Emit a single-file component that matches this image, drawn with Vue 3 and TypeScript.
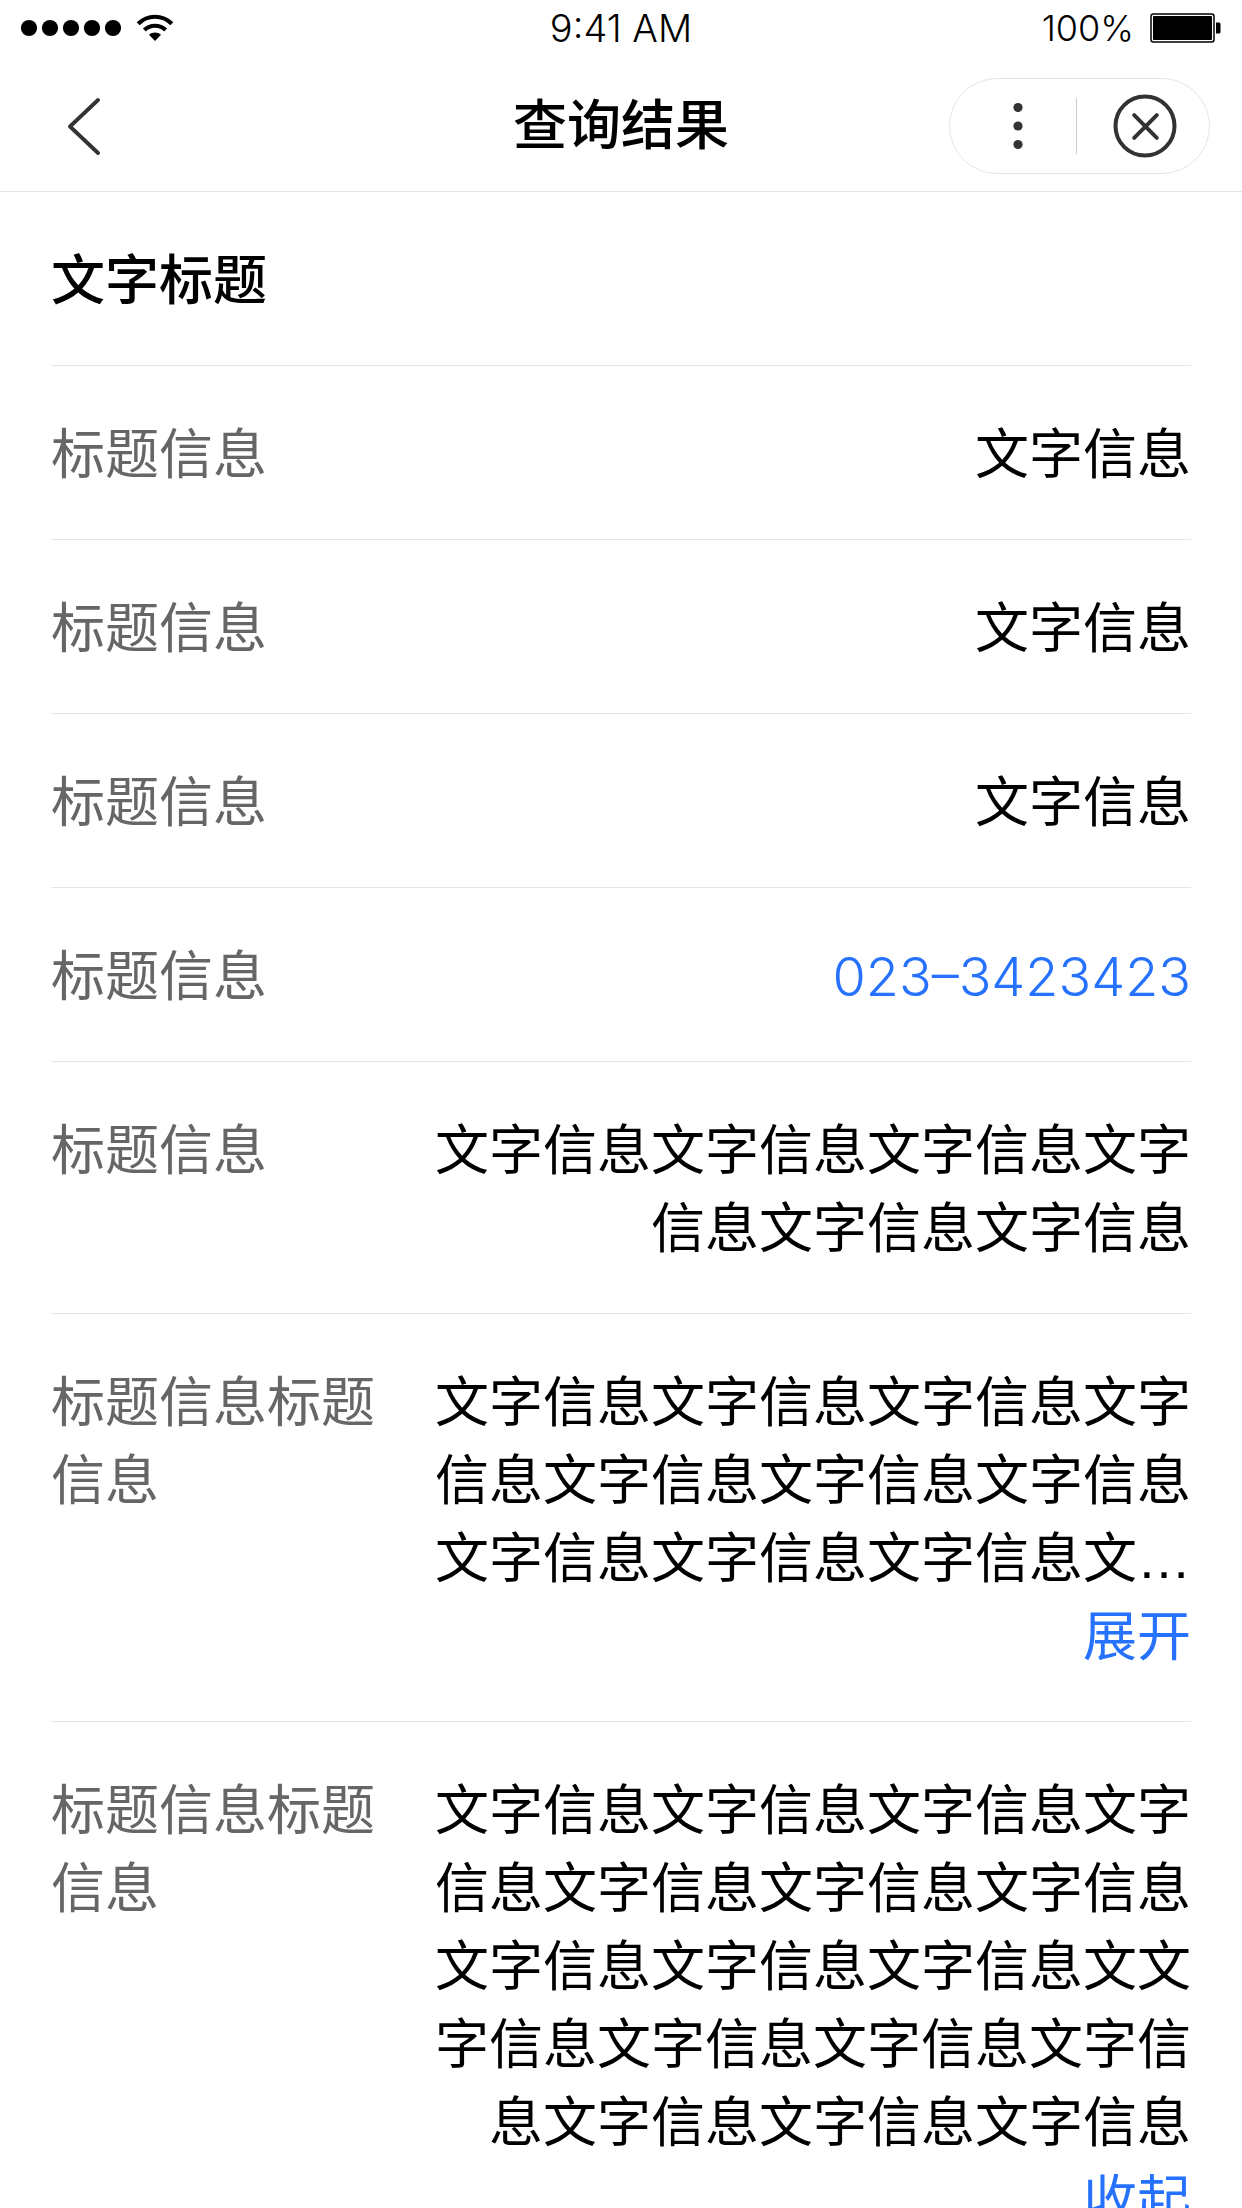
<script setup lang="ts">
import { ref } from 'vue'

interface Row {
  label: string
  value: string
  tel?: string
  collapsible?: boolean
  expanded?: boolean
}

const unit = '文字信息'
const previewLength = 41

const rows = ref<Row[]>([
  { label: '标题信息', value: unit },
  { label: '标题信息', value: unit },
  { label: '标题信息', value: unit },
  { label: '标题信息', value: '023–3423423', tel: '0233423423' },
  { label: '标题信息', value: unit.repeat(6) },
  {
    label: '标题信息标题信息',
    value: unit.repeat(10) + '文' + unit.repeat(7),
    collapsible: true,
    expanded: false,
  },
  {
    label: '标题信息标题信息',
    value: unit.repeat(10) + '文' + unit.repeat(7),
    collapsible: true,
    expanded: true,
  },
])

function shownText(row: Row): string {
  const collapsed = row.collapsible && !row.expanded
  return collapsed ? row.value.slice(0, previewLength) + '…' : row.value
}

function toggle(row: Row): void {
  row.expanded = !row.expanded
}
</script>

<template>
  <div class="screen">
    <div class="status">
      <div class="status-left">
        <svg width="102" height="18" viewBox="0 0 102 18" aria-hidden="true">
          <circle v-for="n in 5" :key="n" :cx="n * 21 - 12" cy="9" r="8.1" />
        </svg>
        <svg width="38" height="28" viewBox="0 0 38 28" aria-hidden="true">
          <path d="M2.200 9.800C11.500.400 26.500.400 35.800 9.800M8.400 16C14.200 10.300 23.800 10.300 29.600 16" fill="none" stroke="#000" stroke-width="4.200" />
          <path d="M13 20.800C16.300 17.600 21.700 17.600 25 20.800L19 27Z" />
        </svg>
      </div>
      <time class="time">9:41 AM</time>
      <div class="status-right">
        <span>100%</span>
        <svg width="72" height="30" viewBox="0 0 72 30" aria-hidden="true">
          <rect x="1" y="1" width="63" height="28" rx="2.5" fill="none" stroke="#000" stroke-width="1.5" />
          <rect x="3" y="3" width="59" height="24" rx="1" />
          <path d="M66 9.500h3q1.500 0 1.500 1.500v8q0 1.500-1.500 1.500h-3z" />
        </svg>
      </div>
    </div>

    <header class="nav">
      <button class="back" type="button" aria-label="返回">
        <svg width="34" height="58" viewBox="0 0 34 58" aria-hidden="true">
          <path d="M31 3 3 29.500 31 56" fill="none" stroke="#333" stroke-width="3.800" stroke-linecap="round" stroke-linejoin="round" />
        </svg>
      </button>
      <h1 class="nav-title">查询结果</h1>
      <div class="capsule">
        <button class="more" type="button" aria-label="更多">
          <svg width="10" height="48" viewBox="0 0 10 48" aria-hidden="true">
            <circle cx="5" cy="5.500" r="4.600" fill="#333" />
            <circle cx="5" cy="24" r="4.600" fill="#333" />
            <circle cx="5" cy="42.500" r="4.600" fill="#333" />
          </svg>
        </button>
        <button class="close" type="button" aria-label="关闭">
          <svg width="64" height="64" viewBox="0 0 64 64" aria-hidden="true">
            <g fill="none" stroke="#333" stroke-width="4" stroke-linecap="round">
              <circle cx="32" cy="32" r="29.500" />
              <path d="M21.200 21.200 43.800 43.800M43.800 21.200 21.200 43.800" />
            </g>
          </svg>
        </button>
      </div>
    </header>

    <main class="content">
      <h2 class="heading">文字标题</h2>
      <dl class="list">
        <div v-for="(row, i) in rows" :key="i" class="row">
          <dt class="label">{{ row.label }}</dt>
          <dd class="value">
            <a v-if="row.tel" class="link tel" :href="'tel:' + row.tel">{{ row.value }}</a>
            <p v-else class="text">{{ shownText(row) }}</p>
            <button
              v-if="row.collapsible"
              class="link toggle"
              type="button"
              :aria-expanded="row.expanded"
              @click="toggle(row)"
            >{{ row.expanded ? '收起' : '展开' }}</button>
          </dd>
        </div>
      </dl>
    </main>
  </div>
</template>

<style>
body {
  margin: 0;
  background: #fff;
}
</style>

<style scoped>
.screen {
  display: flex;
  flex-direction: column;
  height: 100vh;
  overflow: hidden;
  background: #fff;
  color: #000;
  font-family: "Liberation Sans", "Noto Sans CJK SC", sans-serif;
  font-size: 54px;
  line-height: 78px;
}

button {
  margin: 0;
  padding: 0;
  border: 0;
  background: none;
  font: inherit;
  cursor: pointer;
}

svg {
  display: block;
}

.status {
  display: grid;
  grid-template-columns: 1fr auto 1fr;
  align-items: center;
  flex: none;
  box-sizing: border-box;
  height: 60px;
  padding: 0 20px 4px;
  font-family: Inter, sans-serif;
  font-size: 36px;
  font-weight: 300;
  line-height: 48px;
}

.time {
  font-size: 38px;
}

.status-left,
.status-right {
  display: flex;
  align-items: center;
}

.status-left {
  gap: 14px;
}

.status-right {
  justify-content: flex-end;
  gap: 16px;
}

.nav {
  display: grid;
  grid-template-columns: 1fr auto 1fr;
  align-items: center;
  flex: none;
  box-sizing: border-box;
  height: 132px;
  padding: 0 32px;
  border-bottom: 1px solid #e5e5e5;
}

.back {
  display: flex;
  align-items: center;
  justify-content: center;
  width: 104px;
  height: 96px;
}

.nav-title,
.heading {
  margin: 0;
  font-size: 54px;
  font-weight: 500;
}

.capsule {
  display: flex;
  align-items: center;
  justify-self: end;
  box-sizing: border-box;
  width: 261px;
  height: 96px;
  border: 1px solid #e5e5e5;
  border-radius: 48px;
}

.more,
.close {
  display: flex;
  align-items: center;
  justify-content: center;
  height: 56px;
}

.more {
  box-sizing: border-box;
  width: 127px;
  padding-left: 10px;
  border-right: 1px solid #ccc;
}

.close {
  flex: 1;
  padding-left: 3px;
}

.content {
  flex: 1;
  min-height: 0;
  padding: 0 51px;
  overflow-y: auto;
  scrollbar-width: none;
}

.heading,
.row {
  padding: 50px 0 45px;
  border-bottom: 1px solid #e5e5e5;
}

.list {
  margin: 0;
}

.row {
  display: flex;
  gap: 60px;
}

.label {
  flex: none;
  width: 324px;
  color: #666;
}

.value {
  flex: 1;
  min-width: 0;
  margin: 0;
  text-align: right;
}

.text {
  margin: 0;
}

.link {
  color: #2672ff;
  text-decoration: none;
}

.tel {
  font-family: Inter, sans-serif;
  font-weight: 300;
}

.toggle {
  display: block;
  margin-left: auto;
}
</style>
